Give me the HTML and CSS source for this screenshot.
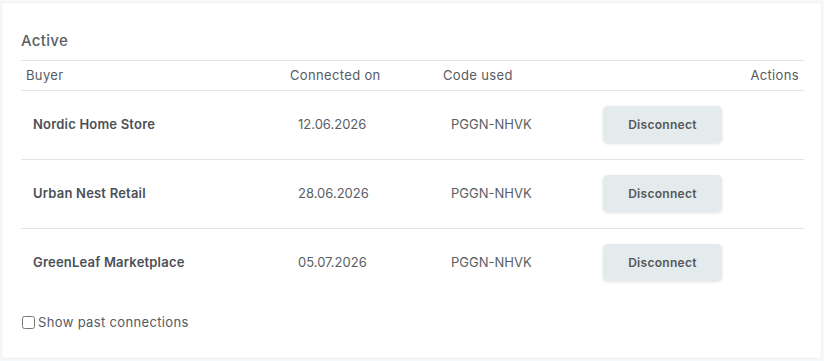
FILE: index.html
```html
<!DOCTYPE html>
<html lang="en">
<head>
<meta charset="utf-8">
<title>Connections</title>
<link rel="stylesheet" href="styles.css">
</head>
<body>
<div class="card">
  <h2 class="title">Active</h2>
  <table class="conn">
    <colgroup>
      <col class="c1"><col class="c2"><col class="c3"><col class="c4">
    </colgroup>
    <thead>
      <tr>
        <th>Buyer</th>
        <th>Connected on</th>
        <th>Code used</th>
        <th class="right">Actions</th>
      </tr>
    </thead>
    <tbody>
      <tr>
        <td class="name">Nordic Home Store</td>
        <td>12.06.2026</td>
        <td>PGGN-NHVK</td>
        <td><button class="btn">Disconnect</button></td>
      </tr>
      <tr>
        <td class="name">Urban Nest Retail</td>
        <td>28.06.2026</td>
        <td>PGGN-NHVK</td>
        <td><button class="btn">Disconnect</button></td>
      </tr>
      <tr>
        <td class="name">GreenLeaf Marketplace</td>
        <td>05.07.2026</td>
        <td>PGGN-NHVK</td>
        <td><button class="btn">Disconnect</button></td>
      </tr>
    </tbody>
  </table>
  <label class="past"><input type="checkbox" class="chk"><span>Show past connections</span></label>
</div>
</body>
</html>
```
FILE: styles.css
```css
html, body {
  margin: 0;
  padding: 0;
}
body {
  background: #f6f8fa;
  padding: 2px 2px 2px 1px;
  font-family: Inter, "Open Sans", sans-serif;
  color: #52575e;
}
.card {
  background: #fff;
  border: 1px solid #eef0f3;
  border-radius: 3px;
  height: 357px;
  box-sizing: border-box;
  padding: 27px 17px 0 19px;
}
.title {
  margin: 0;
  font-size: 15px;
  font-weight: 500;
  line-height: 22px;
  letter-spacing: 0.3px;
  color: #5a5f67;
  padding-bottom: 8px;
  border-bottom: 1px solid #e3e5e8;
}
.conn {
  width: 783px;
  border-collapse: collapse;
  table-layout: fixed;
}
.c1 { width: 264px; }
.c2 { width: 153px; }
.c3 { width: 153px; }
.c4 { width: 213px; }
.conn th {
  text-align: left;
  font-size: 13px;
  font-weight: 400;
  letter-spacing: 0.35px;
  color: #555b63;
  height: 28px;
  padding: 0 5px 1px;
  border-bottom: 1px solid #e3e5e8;
}
.conn th.right { text-align: right; }
.conn td {
  height: 66px;
  padding: 0 12px 2px 13px;
  font-size: 13px;
  letter-spacing: 0;
  color: #5a5e64;
  border-bottom: 1px solid #e3e5e8;
  vertical-align: middle;
}
.conn tbody tr:last-child td { border-bottom: none; }
.conn td.name {
  padding-left: 12px;
  font-weight: 600;
  letter-spacing: 0.2px;
  color: #4b5058;
}
.btn {
  width: 119px;
  height: 37px;
  margin-left: -1px;
  border: none;
  border-radius: 5px;
  background: #e3ebec;
  box-shadow: 0 1px 3px rgba(0, 0, 0, 0.12);
  font-family: inherit;
  font-size: 12px;
  font-weight: 600;
  letter-spacing: 0.3px;
  color: #55575a;
}
.past {
  display: flex;
  align-items: center;
  margin-top: 17px;
  font-size: 13px;
  letter-spacing: 0.35px;
  color: #565b62;
}
.chk {
  margin: 0 3px 0 1px;
  width: 13px;
  height: 13px;
}
```
